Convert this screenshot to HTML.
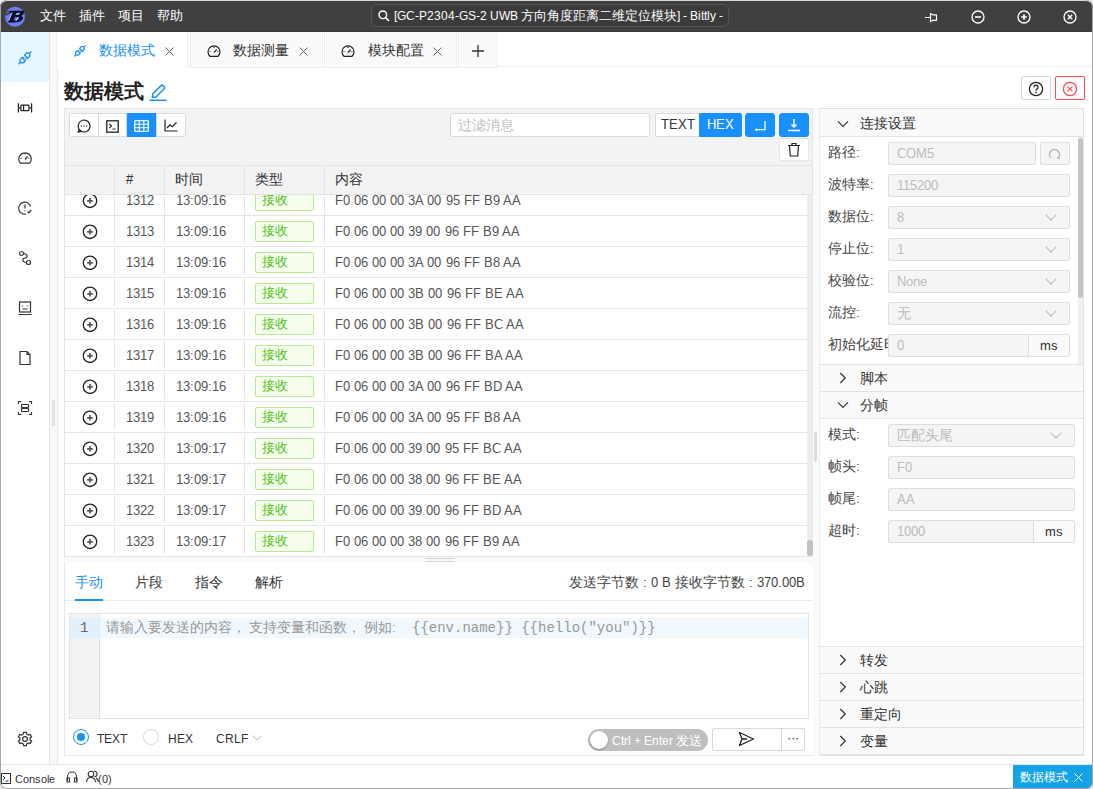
<!DOCTYPE html>
<html><head><meta charset="utf-8">
<style>
@font-face{font-family:"LSA";src:local("Liberation Sans");size-adjust:93%;unicode-range:U+0000-024F,U+2000-206F}
*{box-sizing:border-box;margin:0;padding:0}
html,body{width:1093px;height:789px;overflow:hidden;background:#e9e9e9;font-family:"LSA","Liberation Sans",sans-serif;font-size:14px;color:#333}
.a{position:absolute}
svg{position:absolute;overflow:visible}
#win{position:absolute;left:0;top:0;width:1093px;height:789px;background:#fff;overflow:hidden}
#frame{position:absolute;left:0;top:0;width:1093px;height:789px;border:1px solid #a8a8a8;border-top-color:#d8d8d8;border-radius:7px;box-shadow:0 0 0 30px #e9e9e9;z-index:100}
#title{position:absolute;left:0;top:0;width:1093px;height:32px;background:#404040;color:#fff;border-bottom:1px solid #383838}
.menu{position:absolute;top:7px;font-size:13px;line-height:18px;color:#fff}
#search{position:absolute;left:371px;top:4px;width:358px;height:23px;border:1px solid #555;border-radius:6px;background:#3b3b3b;color:#fff;font-size:13px;line-height:23px;padding-left:22px;white-space:nowrap;overflow:hidden}
#side{position:absolute;left:0;top:32px;width:50px;height:733px;background:#fff;border-right:1px solid #e6e6e6}
#split{position:absolute;left:50px;top:32px;width:8px;height:733px;background:#f8f8f9;border-right:1px solid #e8e9ec}
.tab{position:absolute;top:32px;height:36px;background:#fafafa;border:1px solid #efefef;border-top:none;border-bottom:1px solid #efefef;font-size:14px;line-height:37px;color:#333;white-space:nowrap}
.tab .t{position:absolute;top:0}
.tab .x{position:absolute;top:0;color:#777;font-size:17px}
#tabline{position:absolute;left:57px;top:66px;width:1036px;height:1px;background:#efefef}
h1{position:absolute;left:64px;top:78px;font-size:20px;line-height:28px;font-weight:bold;color:#222}
.btn{position:absolute;background:#fff;border:1px solid #d9d9d9;border-radius:3px}
#panel{position:absolute;left:64px;top:108px;width:749px;height:449px;background:#f2f3f5;border:1px solid #e2e4e8;border-bottom:none}
.ib{position:absolute;top:113px;height:24px;width:29px;background:#fff;border:1px solid #d9d9d9}
#filter{position:absolute;left:450px;top:113px;width:200px;height:24px;background:#fff;border:1px solid #d9d9d9;border-radius:2px;color:#bfbfbf;font-size:14px;line-height:24px;padding-left:7px}
.blue{background:#1890ff;border-color:#1890ff;color:#fff}
#thead{position:absolute;left:65px;top:165px;width:748px;height:30px;background:#f3f3f4;border-top:1px solid #e3e3e3;border-bottom:1px solid #e3e3e3;border-right:1px solid #e3e3e3}
#thead span{position:absolute;top:0;line-height:28px;font-size:14px;color:#333}
.vl{position:absolute;width:1px;background:#e6e6e6}
#tbody{position:absolute;left:65px;top:195px;width:743px;height:361px;background:#fff;overflow:hidden}
.row{position:absolute;left:0;width:743px;height:31px;border-bottom:1px solid #e6e6e6}
.row .c1{position:absolute;left:61px;top:0;line-height:31px;color:#555}
.row .c2{position:absolute;left:111px;top:0;line-height:31px;color:#555}
.row .c4{position:absolute;left:270px;top:0;line-height:31px;color:#555;word-spacing:0.1px}
.row .tag{position:absolute;left:190px;top:5px;width:59px;height:21px;border:1px solid #b7eb8f;background:#f6ffed;color:#52c41a;border-radius:2px;font-size:13px;line-height:19px;padding-left:6px}
.row .pl{position:absolute;left:18px;top:8px;width:15px;height:15px;border:1.5px solid #333;border-radius:50%}
.row .pl:before{content:"";position:absolute;left:3px;top:5.5px;width:6px;height:1.5px;background:#333}
.row .pl:after{content:"";position:absolute;left:5.25px;top:3.25px;width:1.5px;height:6px;background:#333}
#vs{position:absolute;left:807px;top:195px;width:6px;height:361px;background:#ececec;border-left:1px solid #f0f0f0}
#vsth{position:absolute;left:807px;top:540px;width:6px;height:16px;background:#c1c1c1;border-radius:3px}
#hsplit{position:absolute;left:64px;top:556px;width:749px;height:6px;background:#f9f9f9;border-top:1px solid #e6e6e6}
#bottom{position:absolute;left:64px;top:562px;width:750px;height:194px;background:#fff;border:1px solid #e6e6e6;border-top:none}
.bt{position:absolute;top:574px;font-size:14px;line-height:18px;color:#333}
#editor{position:absolute;left:69px;top:613px;width:740px;height:106px;border:1px solid #e2e4e8;background:#fff}
#right{position:absolute;left:819px;top:108px;width:265px;height:648px;background:#fff;border:1px solid #e3e3e6;border-left-color:#ececec;border-top:2px solid #e0e0e3}
.sh{position:absolute;left:820px;width:263px;height:28px;background:#fafafa;border-bottom:1px solid #e3e3e3;font-size:14px;line-height:28px;color:#333}
.sh .t{position:absolute;left:40px;top:0}
.lbl{position:absolute;left:828px;font-size:14px;line-height:18px;color:#444;white-space:nowrap;overflow:hidden}
.inp{position:absolute;height:23px;background:#f5f5f5;border:1px solid #dedede;border-radius:2px;color:#bbb;font-size:14px;line-height:21px;padding-left:8px}
.dd:after{content:"";position:absolute;right:14px;top:4px;width:7px;height:7px;border-right:1px solid #bbb;border-bottom:1px solid #bbb;transform:rotate(45deg)}
.addon{position:absolute;height:23px;background:#fafafa;border-radius:0 2px 2px 0;border:1px solid #dedede;color:#333;font-size:14px;line-height:21px;text-align:center}
#status{position:absolute;left:0;top:764px;width:1093px;height:25px;background:#fff;border-top:1px solid #e6e6e6;font-size:13px;color:#333}

</style></head><body>
<div id="win">
 <div id="title">
  <svg style="left:3px;top:4px" width="25" height="25" viewBox="0 0 25 25"><circle cx="12" cy="12.8" r="10" fill="#6b7cf6"/><path d="M2.2 10.8 C2.5 8.3 5.5 6.8 10 6.8 L19.5 6.8 C21.8 6.8 21.5 9.5 19.2 11.2 L18.2 11.9 C20.2 12.5 20.6 14.8 18.3 16.6 C16.6 18 13.8 18.5 10.8 18.5 L5.5 18.5 C4.6 18.5 5 17.2 6 16.2 L8.8 9.2 C6.8 9.2 4.6 9.8 3.6 11.6 Z" fill="#050a24"/><path d="M13.2 9 L16.8 9 C17.6 9.2 16.6 10.6 15.2 11 L12.4 11 Z M12 13.2 L15.6 13.2 C16.6 13.5 15.6 15.8 13.5 16.5 L10.8 16.5 Z" fill="#6b7cf6"/><path d="M3 10.5 C3.5 9 5 8.5 6.5 8.3 M9.2 8.2 L5.8 16.8 M16.2 8.3 L14 11 M14.8 13.3 L12.8 17.2" fill="none" stroke="#fff" stroke-width="0.8" opacity="0.85"/></svg>
  <div class="menu" style="left:40px">文件</div>
  <div class="menu" style="left:79px">插件</div>
  <div class="menu" style="left:118px">项目</div>
  <div class="menu" style="left:157px">帮助</div>
  <div id="search">[GC-P2304-GS-2 UWB 方向角度距离二维定位模块] - Bittly -</div>
  <svg style="left:378px;top:10px" width="12" height="12" viewBox="0 0 12 12"><circle cx="4.8" cy="4.8" r="3.8" fill="none" stroke="#fff" stroke-width="1.4"/><path d="M7.6 7.6 L11 11" stroke="#fff" stroke-width="1.5"/></svg>
  <svg style="left:920px;top:6px" width="25" height="20" viewBox="0 0 25 20"><path d="M5 11.5 H10.5 M10.5 7.4 L12.5 8.8 H16.5 V14.3 H12.5 L10.5 15.7 Z" fill="none" stroke="#fff" stroke-width="1.2" stroke-linejoin="round"/></svg>
  <svg style="left:971px;top:10px" width="14" height="14" viewBox="0 0 14 14"><circle cx="7" cy="7" r="6" fill="none" stroke="#fff" stroke-width="1.3"/><path d="M4 7 H10" stroke="#fff" stroke-width="1.6"/></svg>
  <svg style="left:1017px;top:10px" width="14" height="14" viewBox="0 0 14 14"><circle cx="7" cy="7" r="6" fill="none" stroke="#fff" stroke-width="1.3"/><path d="M4.2 7 H9.8 M7 4.2 V9.8" stroke="#fff" stroke-width="1.6"/></svg>
  <svg style="left:1063px;top:10px" width="14" height="14" viewBox="0 0 14 14"><circle cx="7" cy="7" r="6" fill="none" stroke="#fff" stroke-width="1.3"/><path d="M4.8 4.8 L9.2 9.2 M9.2 4.8 L4.8 9.2" stroke="#fff" stroke-width="1.4"/></svg>
 </div>
 <div id="side">
  <div class="a" style="left:0;top:0;width:49px;height:50px;background:#e6f7ff"></div>
  <svg style="left:17px;top:18px" width="16" height="16" viewBox="0 0 16 16"><g fill="none" stroke="#1890ff" stroke-width="1.3"><path d="M5 7.5 L3.6 8.9 a2.3 2.3 0 0 0 3.3 3.3 L8.3 10.8 Z"/><path d="M10.8 8.3 L12.2 6.9 a2.3 2.3 0 0 0 -3.3 -3.3 L7.5 5 Z"/><path d="M1.5 14.3 L3.6 12.2 M12.2 3.6 L14.3 1.5 M6.2 8.2 L7.3 7.1 M8.4 9.4 L9.5 8.3"/></g></svg>
  <svg style="left:17px;top:68px" width="16" height="16" viewBox="0 0 16 16"><g fill="none" stroke="#222" stroke-width="1.2"><path d="M1.4 3.3 V12.4 M14.6 3.3 V12.4 M1.4 7.9 H3.9 M11.9 7.9 H14.6 M6.6 5.1 V10.7"/><rect x="3.9" y="5.1" width="8" height="5.6" rx="0.6"/></g></svg>
  <svg style="left:17px;top:118px" width="16" height="16" viewBox="0 0 16 16"><g fill="none" stroke="#333" stroke-width="1.2"><path d="M3.2 13.2 A6.3 6.3 0 1 1 12.8 13.2 Z"/><path d="M8 9.5 L10.5 6.5"/><path d="M8 3.3 V4.3 M3.6 8.3 H4.6 M11.4 8.3 H12.4"/></g></svg>
  <svg style="left:17px;top:168px" width="16" height="16" viewBox="0 0 16 16"><g fill="none" stroke="#333" stroke-width="1.2"><path d="M13.5 6.5 A6 6 0 1 0 9 14"/><path d="M8 4.5 V8.5 M8 10.3 V11.3"/><path d="M10.5 11.5 L11.8 12.8 L14.2 10"/></g></svg>
  <svg style="left:17px;top:218px" width="16" height="16" viewBox="0 0 16 16"><g fill="none" stroke="#333" stroke-width="1.2"><circle cx="4.5" cy="3.5" r="2"/><circle cx="11.5" cy="12.5" r="2"/><path d="M6.5 3.5 C11 3.5 11 8 8 8 C5 8 5 12.5 9.5 12.5"/></g></svg>
  <svg style="left:17px;top:268px" width="16" height="16" viewBox="0 0 16 16"><g fill="none" stroke="#333" stroke-width="1.2"><rect x="2.5" y="2" width="11" height="10"/><path d="M1.5 14.5 H14.5 M5.5 9 H10.5"/><path d="M5.5 5.5 V6.3 M10.5 5.5 V6.3" stroke-width="1.5"/></g></svg>
  <svg style="left:17px;top:318px" width="16" height="16" viewBox="0 0 16 16"><g fill="none" stroke="#333" stroke-width="1.2"><path d="M3 1.5 H10 L13 4.5 V14.5 H3 Z M10 1.5 V4.5 H13"/></g></svg>
  <svg style="left:17px;top:368px" width="16" height="16" viewBox="0 0 16 16"><g fill="none" stroke="#333" stroke-width="1.2"><path d="M1.5 4 V1.5 H4 M12 1.5 H14.5 V4 M14.5 12 V14.5 H12 M4 14.5 H1.5 V12"/><rect x="4.5" y="4.5" width="7" height="3" rx="0.5"/><rect x="4.5" y="8.5" width="7" height="3" rx="0.5"/></g></svg>
  <svg style="left:17px;top:699px" width="16" height="16" viewBox="0 0 16 16"><g fill="none" stroke="#333" stroke-width="1.2"><path d="M6.6 1.3 H9.4 L9.8 3.2 L11.4 4.1 L13.2 3.4 L14.6 5.9 L13.1 7.1 V8.9 L14.6 10.1 L13.2 12.6 L11.4 11.9 L9.8 12.8 L9.4 14.7 H6.6 L6.2 12.8 L4.6 11.9 L2.8 12.6 L1.4 10.1 L2.9 8.9 V7.1 L1.4 5.9 L2.8 3.4 L4.6 4.1 L6.2 3.2 Z"/><circle cx="8" cy="8" r="2.4"/></g></svg>

 </div>
 <div id="split"></div>
 <div id="tabline"></div>
 <div class="tab" style="left:56px;width:132px;background:#fff;border-bottom-color:#fff;color:#1890ff"><span class="t" style="left:42px">数据模式</span></div>
 <div class="tab" style="left:190px;width:133px"><span class="t" style="left:42px">数据测量</span></div>
 <div class="tab" style="left:324px;width:133px"><span class="t" style="left:43px">模块配置</span></div>
 <div class="tab" style="left:458px;width:40px"></div>
 <svg style="left:472px;top:45px" width="12" height="12" viewBox="0 0 12 12"><path d="M6 0 V12 M0 6 H12" stroke="#333" stroke-width="1.3"/></svg>

 <svg style="left:165px;top:47px" width="9" height="9" viewBox="0 0 9 9"><path d="M0.5 0.5 L8.5 8.5 M8.5 0.5 L0.5 8.5" stroke="#666" stroke-width="1"/></svg><svg style="left:299px;top:47px" width="9" height="9" viewBox="0 0 9 9"><path d="M0.5 0.5 L8.5 8.5 M8.5 0.5 L0.5 8.5" stroke="#666" stroke-width="1"/></svg><svg style="left:433px;top:47px" width="9" height="9" viewBox="0 0 9 9"><path d="M0.5 0.5 L8.5 8.5 M8.5 0.5 L0.5 8.5" stroke="#666" stroke-width="1"/></svg>
 <h1>数据模式</h1>
 <div class="btn" style="left:1021px;top:76px;width:30px;height:24px;border-radius:2px"></div>
 <div class="btn" style="left:1055px;top:76px;width:30px;height:24px;border-radius:2px;border-color:#ff4d4f"></div>

 <div id="panel"></div>
 <div class="ib" style="left:69px;width:30px;border-radius:3px 0 0 3px"></div>
 <div class="ib" style="left:98px"></div>
 <div class="ib blue" style="left:127px"></div>
 <div class="ib" style="left:156px;width:30px;border-radius:0 3px 3px 0"></div>
 <div id="filter">过滤消息</div>
 <div class="btn" style="left:655px;top:113px;width:45px;height:24px;border-radius:2px 0 0 2px;line-height:22px;text-align:center">TEXT</div>
 <div class="btn blue" style="left:699px;top:113px;width:43px;height:24px;border-radius:0 2px 2px 0;line-height:22px;text-align:center">HEX</div>
 <div class="btn blue" style="left:745px;top:113px;width:30px;height:24px"></div>
 <div class="btn blue" style="left:779px;top:113px;width:30px;height:24px"></div>
 <div class="btn" style="left:779px;top:138px;width:30px;height:23px;border-color:#e6e6e6;box-shadow:0 1px 1px rgba(0,0,0,0.04)"></div>


 <svg style="left:73px;top:44px" width="14" height="14" viewBox="0 0 16 16"><g fill="none" stroke="#1890ff" stroke-width="1.4"><path d="M5 7.5 L3.6 8.9 a2.3 2.3 0 0 0 3.3 3.3 L8.3 10.8 Z"/><path d="M10.8 8.3 L12.2 6.9 a2.3 2.3 0 0 0 -3.3 -3.3 L7.5 5 Z"/><path d="M1.5 14.3 L3.6 12.2 M12.2 3.6 L14.3 1.5 M6.2 8.2 L7.3 7.1 M8.4 9.4 L9.5 8.3"/></g></svg>
 <svg style="left:207px;top:45px" width="14" height="12" viewBox="0 0 14 12"><g fill="none" stroke="#222" stroke-width="1.2"><path d="M3 11.3 A6 6 0 1 1 11 11.3 Z"/><path d="M7 7.5 L9.6 4.6"/><path d="M7 2 V3 M2.5 6.5 H3.5 M10.5 6.5 H11.5"/></g></svg>
 <svg style="left:341px;top:45px" width="14" height="12" viewBox="0 0 14 12"><g fill="none" stroke="#222" stroke-width="1.2"><path d="M3 11.3 A6 6 0 1 1 11 11.3 Z"/><path d="M7 7.5 L9.6 4.6"/><path d="M7 2 V3 M2.5 6.5 H3.5 M10.5 6.5 H11.5"/></g></svg>
 <svg style="left:149px;top:82px" width="18" height="20" viewBox="0 0 18 20"><g fill="none" stroke="#1890ff" stroke-width="1.5" stroke-linejoin="round"><path d="M3.4 15.4 L3.8 11.8 L12 3.6 Q13 2.6 14 3.6 L15.2 4.8 Q16.2 5.8 15.2 6.8 L7 15 Z"/><path d="M0.6 18.3 H17.6"/></g></svg>
 <svg style="left:1028px;top:81px" width="16" height="16" viewBox="0 0 16 16"><circle cx="8" cy="8" r="6.6" fill="none" stroke="#222" stroke-width="1.3"/><path d="M5.9 6.2 A2.1 2.1 0 1 1 8.7 8.2 C8.1 8.5 8 8.9 8 9.7" fill="none" stroke="#222" stroke-width="1.3"/><circle cx="8" cy="11.6" r="0.8" fill="#222"/></svg>
 <svg style="left:1062px;top:81px" width="16" height="16" viewBox="0 0 16 16"><circle cx="8" cy="8" r="6.6" fill="none" stroke="#ff4d4f" stroke-width="1.3"/><path d="M5.6 5.6 L10.4 10.4 M10.4 5.6 L5.6 10.4" stroke="#ff4d4f" stroke-width="1.3"/></svg>
 <svg style="left:77px;top:119px" width="14" height="14" viewBox="0 0 14 14"><path d="M7 1 A6 6 0 1 1 2.2 10.6 L1.2 13 L4.3 12.2 A6 6 0 0 1 7 1 Z" fill="none" stroke="#222" stroke-width="1.2"/><circle cx="4.3" cy="7" r="0.7" fill="#222"/><circle cx="7" cy="7" r="0.7" fill="#222"/><circle cx="9.7" cy="7" r="0.7" fill="#222"/></svg>
 <svg style="left:106px;top:120px" width="13" height="13" viewBox="0 0 13 13"><rect x="0.8" y="0.8" width="11.4" height="11.4" fill="none" stroke="#222" stroke-width="1.3"/><path d="M3.3 4 L5.5 6 L3.3 8 M6.5 9 H9.5" fill="none" stroke="#222" stroke-width="1.1"/></svg>
 <svg style="left:134px;top:120px" width="15" height="12" viewBox="0 0 15 12"><rect x="0.7" y="0.7" width="13.6" height="10.6" rx="1" fill="none" stroke="#fff" stroke-width="1.3"/><path d="M0.7 4.2 H14.3 M0.7 7.8 H14.3 M5.2 0.7 V11.3 M9.8 0.7 V11.3" stroke="#fff" stroke-width="1.1"/></svg>
 <svg style="left:164px;top:119px" width="14" height="13" viewBox="0 0 14 13"><path d="M1 0.5 V12 H13.5" fill="none" stroke="#222" stroke-width="1.2"/><path d="M3 9 L6 5.8 L8.3 7.8 L12.5 3.5" fill="none" stroke="#222" stroke-width="1.2"/></svg>
 <svg style="left:750px;top:116px" width="20" height="18" viewBox="0 0 20 18"><path d="M15 5 V13.7 H6" fill="none" stroke="#fff" stroke-width="1.3"/><path d="M4.6 13.7 L7 12 V15.4 Z" fill="#fff"/></svg>
 <svg style="left:786px;top:117px" width="16" height="16" viewBox="0 0 16 16"><path d="M8 2 V10 M5.5 7.5 L8 10 L10.5 7.5 M2 13.5 H14" fill="none" stroke="#fff" stroke-width="1.4"/></svg>
 <svg style="left:787px;top:142px" width="14" height="15" viewBox="0 0 14 15"><path d="M1 3.5 H13 M5 3.5 V1.5 H9 V3.5 M2.5 3.5 L3.3 14 H10.7 L11.5 3.5" fill="none" stroke="#222" stroke-width="1.2"/></svg>
 <div id="thead">
  <span style="left:61px">#</span><span style="left:110px">时间</span><span style="left:190px">类型</span><span style="left:270px">内容</span>
 </div>
 <div class="vl" style="left:114px;top:166px;height:28px"></div>
 <div class="vl" style="left:164px;top:166px;height:28px"></div>
 <div class="vl" style="left:244px;top:166px;height:28px"></div>
 <div class="vl" style="left:324px;top:166px;height:28px"></div>
 <div id="tbody">
<div class="row" style="top:-10px"><svg style="left:17px;top:8px" width="16" height="16" viewBox="0 0 16 16"><circle cx="8" cy="7.8" r="6.7" fill="none" stroke="#222" stroke-width="1.3"/><path d="M8 5 V10.6 M5.2 7.8 H10.8" stroke="#555" stroke-width="1.7"/></svg><span class="c1">1312</span><span class="c2">13:09:16</span><span class="tag">接收</span><span class="c4">F0 06 00 00 3A 00 95 FF B9 AA</span></div>
<div class="row" style="top:21px"><svg style="left:17px;top:8px" width="16" height="16" viewBox="0 0 16 16"><circle cx="8" cy="7.8" r="6.7" fill="none" stroke="#222" stroke-width="1.3"/><path d="M8 5 V10.6 M5.2 7.8 H10.8" stroke="#555" stroke-width="1.7"/></svg><span class="c1">1313</span><span class="c2">13:09:16</span><span class="tag">接收</span><span class="c4">F0 06 00 00 39 00 96 FF B9 AA</span></div>
<div class="row" style="top:52px"><svg style="left:17px;top:8px" width="16" height="16" viewBox="0 0 16 16"><circle cx="8" cy="7.8" r="6.7" fill="none" stroke="#222" stroke-width="1.3"/><path d="M8 5 V10.6 M5.2 7.8 H10.8" stroke="#555" stroke-width="1.7"/></svg><span class="c1">1314</span><span class="c2">13:09:16</span><span class="tag">接收</span><span class="c4">F0 06 00 00 3A 00 96 FF B8 AA</span></div>
<div class="row" style="top:83px"><svg style="left:17px;top:8px" width="16" height="16" viewBox="0 0 16 16"><circle cx="8" cy="7.8" r="6.7" fill="none" stroke="#222" stroke-width="1.3"/><path d="M8 5 V10.6 M5.2 7.8 H10.8" stroke="#555" stroke-width="1.7"/></svg><span class="c1">1315</span><span class="c2">13:09:16</span><span class="tag">接收</span><span class="c4">F0 06 00 00 3B 00 96 FF BE AA</span></div>
<div class="row" style="top:114px"><svg style="left:17px;top:8px" width="16" height="16" viewBox="0 0 16 16"><circle cx="8" cy="7.8" r="6.7" fill="none" stroke="#222" stroke-width="1.3"/><path d="M8 5 V10.6 M5.2 7.8 H10.8" stroke="#555" stroke-width="1.7"/></svg><span class="c1">1316</span><span class="c2">13:09:16</span><span class="tag">接收</span><span class="c4">F0 06 00 00 3B 00 96 FF BC AA</span></div>
<div class="row" style="top:145px"><svg style="left:17px;top:8px" width="16" height="16" viewBox="0 0 16 16"><circle cx="8" cy="7.8" r="6.7" fill="none" stroke="#222" stroke-width="1.3"/><path d="M8 5 V10.6 M5.2 7.8 H10.8" stroke="#555" stroke-width="1.7"/></svg><span class="c1">1317</span><span class="c2">13:09:16</span><span class="tag">接收</span><span class="c4">F0 06 00 00 3B 00 96 FF BA AA</span></div>
<div class="row" style="top:176px"><svg style="left:17px;top:8px" width="16" height="16" viewBox="0 0 16 16"><circle cx="8" cy="7.8" r="6.7" fill="none" stroke="#222" stroke-width="1.3"/><path d="M8 5 V10.6 M5.2 7.8 H10.8" stroke="#555" stroke-width="1.7"/></svg><span class="c1">1318</span><span class="c2">13:09:16</span><span class="tag">接收</span><span class="c4">F0 06 00 00 3A 00 96 FF BD AA</span></div>
<div class="row" style="top:207px"><svg style="left:17px;top:8px" width="16" height="16" viewBox="0 0 16 16"><circle cx="8" cy="7.8" r="6.7" fill="none" stroke="#222" stroke-width="1.3"/><path d="M8 5 V10.6 M5.2 7.8 H10.8" stroke="#555" stroke-width="1.7"/></svg><span class="c1">1319</span><span class="c2">13:09:16</span><span class="tag">接收</span><span class="c4">F0 06 00 00 3A 00 95 FF B8 AA</span></div>
<div class="row" style="top:238px"><svg style="left:17px;top:8px" width="16" height="16" viewBox="0 0 16 16"><circle cx="8" cy="7.8" r="6.7" fill="none" stroke="#222" stroke-width="1.3"/><path d="M8 5 V10.6 M5.2 7.8 H10.8" stroke="#555" stroke-width="1.7"/></svg><span class="c1">1320</span><span class="c2">13:09:17</span><span class="tag">接收</span><span class="c4">F0 06 00 00 39 00 95 FF BC AA</span></div>
<div class="row" style="top:269px"><svg style="left:17px;top:8px" width="16" height="16" viewBox="0 0 16 16"><circle cx="8" cy="7.8" r="6.7" fill="none" stroke="#222" stroke-width="1.3"/><path d="M8 5 V10.6 M5.2 7.8 H10.8" stroke="#555" stroke-width="1.7"/></svg><span class="c1">1321</span><span class="c2">13:09:17</span><span class="tag">接收</span><span class="c4">F0 06 00 00 38 00 96 FF BE AA</span></div>
<div class="row" style="top:300px"><svg style="left:17px;top:8px" width="16" height="16" viewBox="0 0 16 16"><circle cx="8" cy="7.8" r="6.7" fill="none" stroke="#222" stroke-width="1.3"/><path d="M8 5 V10.6 M5.2 7.8 H10.8" stroke="#555" stroke-width="1.7"/></svg><span class="c1">1322</span><span class="c2">13:09:17</span><span class="tag">接收</span><span class="c4">F0 06 00 00 39 00 96 FF BD AA</span></div>
<div class="row" style="top:331px"><svg style="left:17px;top:8px" width="16" height="16" viewBox="0 0 16 16"><circle cx="8" cy="7.8" r="6.7" fill="none" stroke="#222" stroke-width="1.3"/><path d="M8 5 V10.6 M5.2 7.8 H10.8" stroke="#555" stroke-width="1.7"/></svg><span class="c1">1323</span><span class="c2">13:09:17</span><span class="tag">接收</span><span class="c4">F0 06 00 00 38 00 96 FF B9 AA</span></div>
 </div>
 <div class="a" style="left:114px;top:195px;width:1px;height:361px;background:repeating-linear-gradient(to bottom,#e6e6e6 0,#e6e6e6 27px,transparent 27px,transparent 31px);background-position:0 22px"></div><div class="a" style="left:164px;top:195px;width:1px;height:361px;background:repeating-linear-gradient(to bottom,#e6e6e6 0,#e6e6e6 27px,transparent 27px,transparent 31px);background-position:0 22px"></div><div class="a" style="left:244px;top:195px;width:1px;height:361px;background:repeating-linear-gradient(to bottom,#e6e6e6 0,#e6e6e6 27px,transparent 27px,transparent 31px);background-position:0 22px"></div><div class="a" style="left:324px;top:195px;width:1px;height:361px;background:repeating-linear-gradient(to bottom,#e6e6e6 0,#e6e6e6 27px,transparent 27px,transparent 31px);background-position:0 22px"></div>
 <div id="vs"></div><div id="vsth"></div>
 <div id="hsplit"></div>
 <div class="a" style="left:425px;top:558px;width:30px;height:1px;background:#d6d6d6"></div><div class="a" style="left:425px;top:561px;width:30px;height:1px;background:#d6d6d6"></div>
 
 <div class="a" style="left:52px;top:400px;width:3px;height:26px;background:#e2e2e2;border-radius:1px"></div>
 <div id="bottom"></div>
 <div class="bt" style="left:75px;color:#1890ff">手动</div>
 <div class="bt" style="left:135px">片段</div>
 <div class="bt" style="left:195px">指令</div>
 <div class="bt" style="left:255px">解析</div>
 <div class="a" style="left:65px;top:600px;width:747px;height:1px;background:#ebebeb"></div>
 <div class="a" style="left:75px;top:599px;width:28px;height:2px;background:#1890ff"></div>
 <div class="bt" style="left:569px;color:#444">发送字节数 : 0 B 接收字节数 : 370.00B</div>
 <div id="editor"></div>
 <div class="a" style="left:70px;top:614px;width:30px;height:104px;background:#f3f3f3;border-right:1px solid #e2e2e2"></div>
 <div class="a" style="left:70px;top:618px;width:30px;height:20px;background:#e2f0fc"></div>
 <div class="a" style="left:100px;top:618px;width:708px;height:20px;background:#f0f7fd"></div>
 <div class="a" style="left:80px;top:618px;font-family:'Liberation Mono',monospace;font-size:14px;line-height:20px;color:#666">1</div>
 <div class="a" style="left:106px;top:618px;font-size:14px;line-height:20px;color:#999;white-space:nowrap">请输入要发送的内容<span style="margin-right:3px">，</span>支持变量和函数<span style="margin-right:3px">，</span>例如:<span style="position:absolute;left:306px;font-family:'Liberation Mono',monospace">{{env.name}} {{hello("you")}}</span></div>
 <div class="a" style="left:73px;top:729px;width:16px;height:16px;border:1px solid #1890ff;border-radius:50%;background:#fff"></div>
 <div class="a" style="left:77px;top:733px;width:8px;height:8px;border-radius:50%;background:#1890ff"></div>
 <div class="bt" style="left:97px;top:730px;font-size:13px">TEXT</div>
 <div class="a" style="left:143px;top:729px;width:16px;height:16px;border:1px solid #d9d9d9;border-radius:50%;background:#fff"></div>
 <div class="bt" style="left:168px;top:730px;font-size:13px">HEX</div>
 <div class="bt" style="left:216px;top:730px;font-size:13px">CRLF</div>
 <svg style="left:252px;top:735px" width="10" height="6" viewBox="0 0 10 6"><path d="M0.5 0.5 L5 5 L9.5 0.5" fill="none" stroke="#bbb" stroke-width="1"/></svg>
 <div class="a" style="left:588px;top:729px;width:120px;height:22px;border-radius:11px;background:#bfbfbf;color:#fff;font-size:13px;line-height:24px;padding-left:24px;white-space:nowrap">Ctrl + Enter 发送</div>
 <div class="a" style="left:590px;top:731px;width:18px;height:18px;border-radius:50%;background:#fff;box-shadow:0 1px 2px rgba(0,0,0,.3)"></div>
 <div class="btn" style="left:712px;top:728px;width:70px;height:23px;border-radius:2px 0 0 2px"></div>
 <div class="btn" style="left:781px;top:728px;width:24px;height:23px;border-radius:0 2px 2px 0;text-align:center;line-height:17px;font-size:14px;color:#333">···</div>
 <svg style="left:738px;top:731px" width="17" height="16" viewBox="0 0 17 16"><path d="M1.5 1.5 L15.5 8 L1.5 14.5 L4 8 Z M4 8 H9" fill="none" stroke="#222" stroke-width="1.3" stroke-linejoin="round"/></svg>


 <div class="a" style="left:813px;top:108px;width:6px;height:648px;background:#fafafa"></div>
 <div class="a" style="left:814px;top:432px;width:3px;height:30px;background:#dedede;border-radius:1px"></div>
 <div id="right"></div>
 <div class="sh" style="top:109px"><span class="t" style="top:1px">连接设置</span></div>
 <svg style="left:837px;top:120px" width="12" height="8" viewBox="0 0 12 8"><path d="M1 1.3 L6 6.3 L11 1.3" fill="none" stroke="#333" stroke-width="1.2"/></svg>
 <div class="lbl" style="top:144px;width:60px">路径:</div>
 <div class="inp" style="left:888px;top:142px;width:148px">COM5</div>
 <div class="inp" style="left:1040px;top:142px;width:30px"></div>
 <svg style="left:1048px;top:148px" width="13" height="12" viewBox="0 0 13 12"><path d="M2.6 9.8 A5 5 0 1 1 10.4 9.8" fill="none" stroke="#aaa" stroke-width="1.2"/><path d="M9 9.8 L10.8 10.5 L11.2 8.7" fill="none" stroke="#aaa" stroke-width="1.1"/></svg>
 <div class="lbl" style="top:176px;width:60px">波特率:</div>
 <div class="inp" style="left:888px;top:174px;width:182px">115200</div>
 <div class="lbl" style="top:208px;width:60px">数据位:</div>
 <div class="inp dd" style="left:888px;top:206px;width:182px">8</div>
 <div class="lbl" style="top:240px;width:60px">停止位:</div>
 <div class="inp dd" style="left:888px;top:238px;width:182px">1</div>
 <div class="lbl" style="top:272px;width:60px">校验位:</div>
 <div class="inp dd" style="left:888px;top:270px;width:182px">None</div>
 <div class="lbl" style="top:304px;width:60px">流控:</div>
 <div class="inp dd" style="left:888px;top:302px;width:182px">无</div>
 <div class="lbl" style="top:336px;width:60px">初始化延时</div>
 <div class="inp" style="left:888px;top:334px;width:141px">0</div>
 <div class="addon" style="left:1028px;top:334px;width:42px">ms</div>
 <div class="a" style="left:1078px;top:137px;width:5px;height:228px;background:#f0f0f0"></div>
 <div class="a" style="left:1078px;top:138px;width:5px;height:160px;background:#c4c4c4;border-radius:3px"></div>
 <div class="sh" style="top:364px;border-top:1px solid #e3e3e3"><span class="t">脚本</span></div>
 <svg style="left:839px;top:372px" width="8" height="12" viewBox="0 0 8 12"><path d="M1.3 1 L6.3 6 L1.3 11" fill="none" stroke="#333" stroke-width="1.2"/></svg>
 <div class="sh" style="top:392px;height:27px"><span class="t">分帧</span></div>
 <svg style="left:837px;top:401px" width="12" height="8" viewBox="0 0 12 8"><path d="M1 1.3 L6 6.3 L11 1.3" fill="none" stroke="#333" stroke-width="1.2"/></svg>
 <div class="lbl" style="top:426px;width:60px">模式:</div>
 <div class="inp dd" style="left:888px;top:424px;width:187px">匹配头尾</div>
 <div class="lbl" style="top:458px;width:60px">帧头:</div>
 <div class="inp" style="left:888px;top:456px;width:187px">F0</div>
 <div class="lbl" style="top:490px;width:60px">帧尾:</div>
 <div class="inp" style="left:888px;top:488px;width:187px">AA</div>
 <div class="lbl" style="top:522px;width:60px">超时:</div>
 <div class="inp" style="left:888px;top:520px;width:146px">1000</div>
 <div class="addon" style="left:1033px;top:520px;width:42px">ms</div>
 <div class="sh" style="top:646px;height:28px;border-top:1px solid #e3e3e3"><span class="t">转发</span></div>
 <svg style="left:839px;top:654px" width="8" height="12" viewBox="0 0 8 12"><path d="M1.3 1 L6.3 6 L1.3 11" fill="none" stroke="#333" stroke-width="1.2"/></svg>
 <div class="sh" style="top:673px;height:28px;border-top:1px solid #e3e3e3"><span class="t">心跳</span></div>
 <svg style="left:839px;top:681px" width="8" height="12" viewBox="0 0 8 12"><path d="M1.3 1 L6.3 6 L1.3 11" fill="none" stroke="#333" stroke-width="1.2"/></svg>
 <div class="sh" style="top:700px;height:28px;border-top:1px solid #e3e3e3"><span class="t">重定向</span></div>
 <svg style="left:839px;top:708px" width="8" height="12" viewBox="0 0 8 12"><path d="M1.3 1 L6.3 6 L1.3 11" fill="none" stroke="#333" stroke-width="1.2"/></svg>
 <div class="sh" style="top:727px;height:28px;border-top:1px solid #e3e3e3"><span class="t">变量</span></div>
 <svg style="left:839px;top:735px" width="8" height="12" viewBox="0 0 8 12"><path d="M1.3 1 L6.3 6 L1.3 11" fill="none" stroke="#333" stroke-width="1.2"/></svg>


 <div id="frame"></div>
 <div id="status">
  <svg style="left:1px;top:8px" width="10" height="11" viewBox="0 0 10 11"><rect x="0.5" y="0.5" width="9" height="10" fill="none" stroke="#333" stroke-width="1"/><path d="M2 3 L4 5 L2 7 M4.5 8 H7.5" fill="none" stroke="#333" stroke-width="1"/></svg>
  <div class="a" style="left:15px;top:6px;font-size:12px;line-height:16px">Console</div>
  <svg style="left:66px;top:5px" width="12" height="13" viewBox="0 0 12 13"><path d="M1.5 11 V6.5 A4.5 4.5 0 0 1 10.5 6.5 V11 M1 8 H3.5 V12 H1 Z M8.5 8 H11 V12 H8.5 Z" fill="none" stroke="#333" stroke-width="1.1"/></svg>
  <svg style="left:86px;top:5px" width="13" height="13" viewBox="0 0 13 13"><circle cx="5" cy="4" r="2.8" fill="none" stroke="#333" stroke-width="1.1"/><path d="M0.5 12 C0.8 8.5 3 7.5 5 7.5 C7 7.5 9.2 8.5 9.5 12 M8 1.2 A2.8 2.8 0 0 1 8.5 6.8 M10 8 C11.5 8.8 12.3 10 12.5 12" fill="none" stroke="#333" stroke-width="1.1"/></svg>
  <div class="a" style="left:98px;top:6px;font-size:12px;line-height:16px">(0)</div>
  <div class="a" style="left:1013px;top:0px;width:80px;height:24px;background:#13a4e8;color:#fff;font-size:12px;line-height:25px;padding-left:7px;border-radius:0 0 6px 0">数据模式</div>
  <svg style="left:1074px;top:8px" width="9" height="9" viewBox="0 0 9 9"><path d="M0.5 0.5 L8.5 8.5 M8.5 0.5 L0.5 8.5" stroke="#fff" stroke-width="1"/></svg>
 </div>

</div>

</body></html>
